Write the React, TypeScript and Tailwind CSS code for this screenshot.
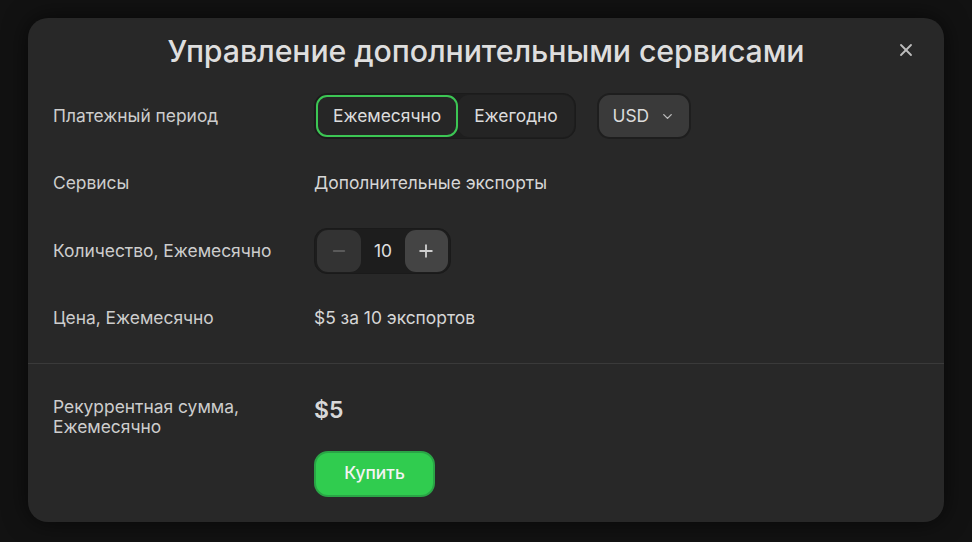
import { ChevronDown, Minus, Plus, X } from 'lucide-react'

const font = { fontFamily: 'Inter, "Noto Sans", sans-serif' }

function Row({ label, children }: { label: React.ReactNode; children: React.ReactNode }) {
  return (
    <div className="flex h-[46px] items-center">
      <div className="w-[261px] shrink-0 text-[17.4px] text-[#cdcdcd]">{label}</div>
      <div className="flex items-center text-[17.4px] text-[#d6d6d6]">{children}</div>
    </div>
  )
}

export default function App() {
  return (
    <div className="h-[542px] w-[972px] bg-[#121212] pt-[18px] pl-[28px]" style={font}>
      <div className="relative h-[504px] w-[916px] rounded-[20px] bg-[#282828] shadow-[0_0_24px_rgba(0,0,0,0.6)]">
        <div className="flex h-[66px] items-center justify-center">
          <h1 className="text-[30.3px] leading-[36px] font-medium tracking-[-0.1px] text-[#dedede]">
            Управление дополнительными сервисами
          </h1>
        </div>
        <button className="absolute right-[28px] top-[22px] text-[#bdbdbd]" aria-label="Закрыть">
          <X size={20} strokeWidth={2.2} />
        </button>

        <div className="flex flex-col gap-[21.5px] px-[25px] pt-[9px]">
          <Row label="Платежный период">
            <div className="flex h-[46px] items-center rounded-[13px] border border-[#1b1b1b] bg-[#1e1e1e] p-[1px]">
              <button className="h-[42px] rounded-[11px] border-2 border-[#3cc654] bg-[#262626] px-[15px] text-[#dcdcdc]">
                Ежемесячно
              </button>
              <button className="h-[42px] rounded-[11px] bg-[#242424] px-[16px] text-[#dcdcdc]">
                Ежегодно
              </button>
            </div>
            <button className="ml-[21px] flex h-[46px] w-[94px] items-center justify-center gap-[11px] rounded-[13px] border-2 border-[#1e1e1e] bg-[#3a3a3a] text-[#dcdcdc]">
              USD
              <ChevronDown size={15} strokeWidth={2.2} className="text-[#bbbbbb]" />
            </button>
          </Row>

          <Row label="Сервисы">
            <span>Дополнительные экспорты</span>
          </Row>

          <Row label="Количество, Ежемесячно">
            <div className="flex h-[46px] w-[137px] items-center justify-between rounded-[13px] border border-[#1a1a1a] bg-[#1d1d1d] p-[2px]">
              <button className="flex h-[42px] w-[44px] items-center justify-center rounded-[11px] bg-[#333333] text-[#5a5a5a]">
                <Minus size={18} strokeWidth={2.5} />
              </button>
              <span className="text-[#e0e0e0]">10</span>
              <button className="flex h-[42px] w-[43px] items-center justify-center rounded-[11px] bg-[#444444] text-[#cfcfcf]">
                <Plus size={20} strokeWidth={2.2} />
              </button>
            </div>
          </Row>

          <Row label="Цена, Ежемесячно">
            <span>$5 за 10 экспортов</span>
          </Row>
        </div>

        <div className="mt-[21px] border-t border-[#3a3a3a]" />

        <div className="flex px-[25px]">
          <div className="w-[261px] shrink-0 pt-[33px] text-[17.4px] leading-[20px] text-[#cdcdcd]">
            Рекуррентная сумма,
            <br />
            Ежемесячно
          </div>
          <div className="flex flex-col items-start pt-[32px]">
            <div className="text-[23px] font-semibold leading-[28px] text-[#d8d8d8]">$5</div>
            <button className="mt-[27px] h-[46px] w-[121px] rounded-[14px] border-2 border-[#2aa546] bg-[#30cc4f] text-[17.4px] font-medium text-[#f4f4f4]">
              Купить
            </button>
          </div>
        </div>
      </div>
    </div>
  )
}
